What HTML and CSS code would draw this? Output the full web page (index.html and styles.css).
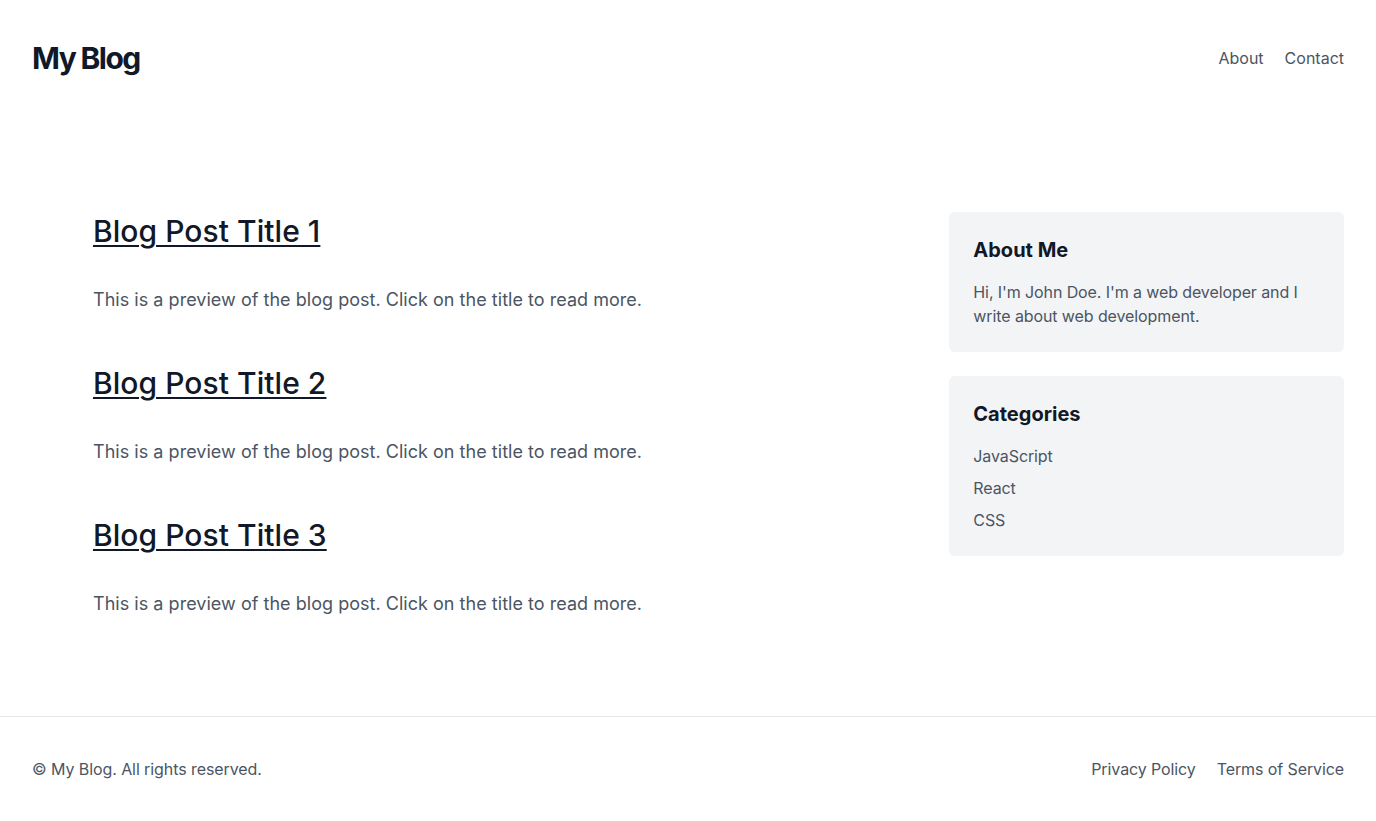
FILE: index.html
```html
<!DOCTYPE html>
<html lang="en">
<head>
<meta charset="utf-8">
<title>My Blog</title>
<link rel="stylesheet" href="styles.css">
</head>
<body>
<div class="page">
  <header class="site-header">
    <h1 class="logo">My Blog</h1>
    <nav class="nav">
      <a href="#">About</a>
      <a href="#">Contact</a>
    </nav>
  </header>
  <main class="main">
    <section class="posts">
      <article class="post">
        <h2 class="post-title"><a href="#">Blog Post Title 1</a></h2>
        <p class="post-preview">This is a preview of the blog post. Click on the title to read more.</p>
      </article>
      <article class="post">
        <h2 class="post-title"><a href="#">Blog Post Title 2</a></h2>
        <p class="post-preview">This is a preview of the blog post. Click on the title to read more.</p>
      </article>
      <article class="post">
        <h2 class="post-title"><a href="#">Blog Post Title 3</a></h2>
        <p class="post-preview">This is a preview of the blog post. Click on the title to read more.</p>
      </article>
    </section>
    <aside class="sidebar">
      <div class="widget">
        <h3 class="widget-title">About Me</h3>
        <p class="widget-text">Hi, I'm John Doe. I'm a web developer and I write about web development.</p>
      </div>
      <div class="widget">
        <h3 class="widget-title">Categories</h3>
        <ul class="cat-list">
          <li><a href="#">JavaScript</a></li>
          <li><a href="#">React</a></li>
          <li><a href="#">CSS</a></li>
        </ul>
      </div>
    </aside>
  </main>
  <footer class="site-footer">
    <p class="copy">© My Blog. All rights reserved.</p>
    <nav class="footer-nav">
      <a href="#">Privacy Policy</a>
      <a href="#">Terms of Service</a>
    </nav>
  </footer>
</div>
</body>
</html>
```
FILE: styles.css
```css
* { box-sizing: border-box; }
html, body { margin: 0; padding: 0; }
body {
  font-family: Inter, "Noto Sans", sans-serif;
  color: #111827;
  background: #ffffff;
  font-size: 16px;
  line-height: 24px;
}
a { color: inherit; text-decoration: none; }
h1, h2, h3, p, ul { margin: 0; padding: 0; }
ul { list-style: none; }

.page {
  min-height: 821px;
  display: flex;
  flex-direction: column;
}

.site-header {
  display: flex;
  justify-content: space-between;
  align-items: center;
  padding: 40px 32px;
}
.logo {
  font-size: 30px;
  line-height: 36px;
  font-weight: 700;
  letter-spacing: -1.6px;
  color: #111827;
}
.nav {
  display: flex;
  gap: 21px;
}
.nav a {
  color: #4b5563;
  font-size: 16px;
  line-height: 24px;
}

.main {
  flex: 1;
  display: grid;
  grid-template-columns: repeat(3, 1fr);
  column-gap: 64px;
  padding: 96px 32px;
  align-items: start;
}
.posts {
  grid-column: span 2;
  padding-left: 61px;
  padding-top: 1px;
  display: flex;
  flex-direction: column;
  gap: 51px;
}
.post-title {
  font-size: 30px;
  line-height: 36px;
  font-weight: 500;
  letter-spacing: 0.05px;
  color: #111827;
  margin-bottom: 37px;
}
.post-title a {
  text-decoration: underline;
  text-underline-offset: 3px;
  text-decoration-thickness: 2px;
}
.post-preview {
  font-size: 18px;
  line-height: 28px;
  letter-spacing: 0.03px;
  color: #4b5563;
}

.sidebar {
  display: flex;
  flex-direction: column;
  gap: 24px;
}
.widget {
  background: #f3f4f6;
  border-radius: 6px;
  padding: 24px;
}
.widget-title {
  font-size: 20px;
  line-height: 28px;
  font-weight: 700;
  color: #111827;
  margin-bottom: 16px;
}
.widget-text {
  color: #4b5563;
  font-size: 16px;
  line-height: 24px;
  letter-spacing: -0.1px;
}
.cat-list {
  display: flex;
  flex-direction: column;
  gap: 8px;
}
.cat-list a {
  color: #4b5563;
  letter-spacing: -0.1px;
}

.site-footer {
  border-top: 1px solid #e5e7eb;
  display: flex;
  justify-content: space-between;
  align-items: center;
  padding: 40px 32px;
}
.copy {
  color: #4b5563;
  font-size: 16px;
  line-height: 24px;
  letter-spacing: -0.08px;
}
.footer-nav {
  display: flex;
  gap: 21px;
}
.footer-nav a {
  color: #4b5563;
  letter-spacing: -0.1px;
}
```
